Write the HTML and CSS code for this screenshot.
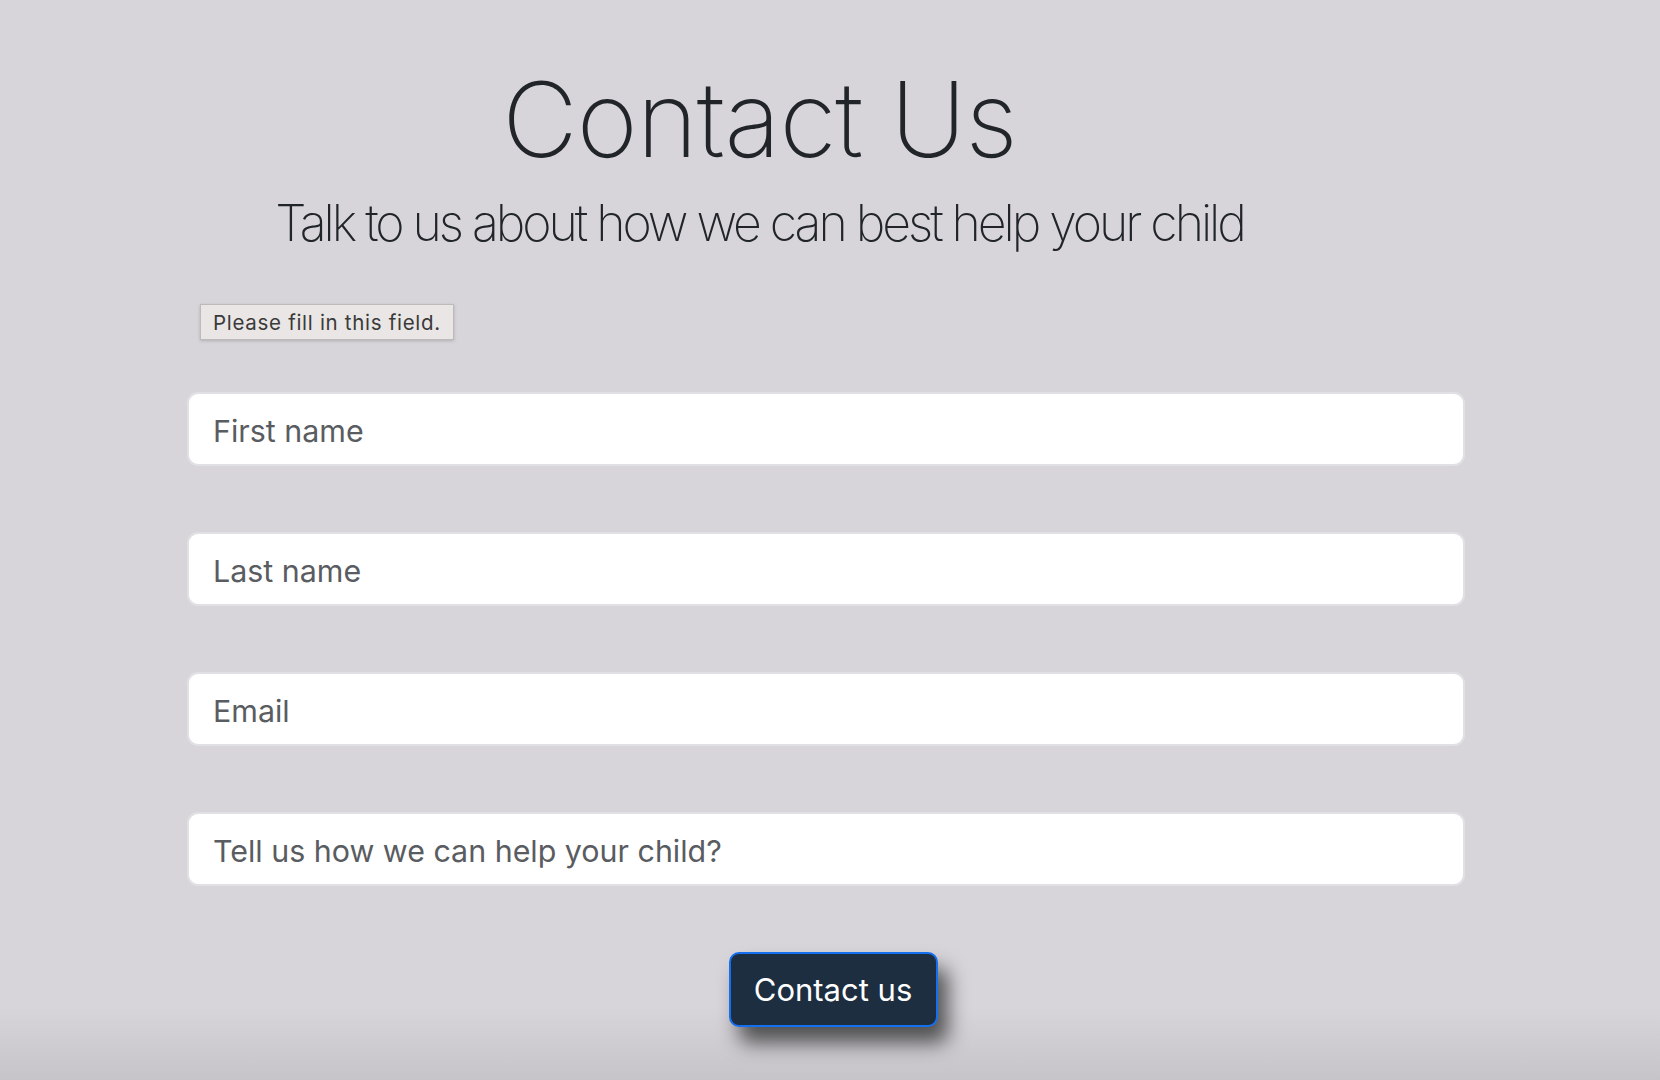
FILE: index.html
```html
<!DOCTYPE html>
<html lang="en">
<head>
<meta charset="utf-8">
<title>Contact Us</title>
<link rel="stylesheet" href="styles.css">
</head>
<body>
<main class="page">
  <header class="intro">
    <h1 class="title">Contact Us</h1>
    <p class="subtitle">Talk to us about how we can best help your child</p>
  </header>
  <form class="form">
    <div class="tooltip">Please fill in this field.</div>
    <input class="field" type="text" placeholder="First name">
    <input class="field" type="text" placeholder="Last name">
    <input class="field" type="email" placeholder="Email">
    <input class="field" type="text" placeholder="Tell us how we can help your child?">
    <div class="actions">
      <button class="btn" type="button">Contact us</button>
    </div>
  </form>
  <div class="bottom-fade"></div>
</main>
</body>
</html>
```

FILE: styles.css
```css
html, body {
  margin: 0;
  padding: 0;
  height: 100%;
}
body {
  background: #d7d5da;
  font-family: Inter, "Noto Sans", sans-serif;
  color: #212529;
  overflow: hidden;
}
.page {
  position: relative;
  height: 1080px;
  box-sizing: border-box;
  padding-top: 67px;
}
.intro {
  margin: 0 196px 0 187px;
  padding-right: 132px;
  text-align: center;
}
.title {
  margin: 0;
  font-size: 104px;
  line-height: 104px;
  font-weight: 200;
  letter-spacing: -1px;
  color: #212529;
}
.subtitle {
  margin: 27px 0 0;
  font-size: 50px;
  line-height: 50px;
  font-weight: 200;
  letter-spacing: -3.05px;
  color: #212529;
}
.form {
  position: relative;
  margin: 144px 195px 0 187px;
  display: flex;
  flex-direction: column;
  gap: 66px;
}
.tooltip {
  position: absolute;
  left: 13px;
  top: -88px;
  height: 36px;
  box-sizing: border-box;
  padding: 0 12px;
  display: flex;
  align-items: center;
  background: #e9e6e5;
  border: 1px solid #bdbabb;
  box-shadow: 0 1px 3px rgba(0,0,0,0.18);
  font-family: Inter, "Noto Sans", sans-serif;
  font-size: 20.5px;
  color: #3a3a3a;
  letter-spacing: 0.7px;
}
.field {
  display: block;
  width: 100%;
  height: 74px;
  box-sizing: border-box;
  margin: 0;
  padding: 4px 24px 0;
  border: 2px solid #e1e1e5;
  border-radius: 11px;
  background: #fff;
  font-family: Inter, "Noto Sans", sans-serif;
  font-size: 30.4px;
  color: #212529;
  outline: none;
}
.field::placeholder {
  color: #595c60;
  opacity: 1;
}
.actions {
  display: flex;
  justify-content: center;
  padding-left: 14px;
  margin-top: 0;
}
.btn {
  width: 209px;
  height: 75px;
  box-sizing: border-box;
  border: 2px solid #1570f0;
  border-radius: 10px;
  background: #1c2e40;
  color: #fff;
  font-family: Inter, "Noto Sans", sans-serif;
  font-size: 31px;
  font-weight: 400;
  padding: 0;
  box-shadow: 10px 16px 20px rgba(0,0,0,0.62);
  position: relative;
  z-index: 2;
}
.bottom-fade {
  position: absolute;
  left: 0;
  right: 0;
  bottom: 0;
  height: 72px;
  background: linear-gradient(to bottom, rgba(198,196,201,0) 0%, rgba(198,196,201,1) 100%);
  pointer-events: none;
  z-index: 1;
}
```
